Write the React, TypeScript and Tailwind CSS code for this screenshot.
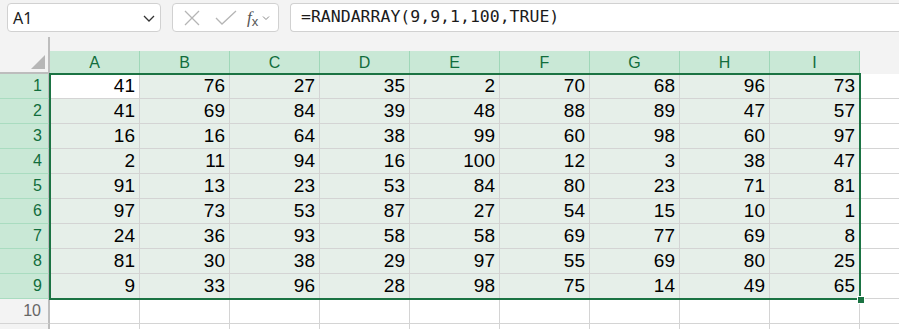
import React from "react";

const data = [
  [41, 76, 27, 35, 2, 70, 68, 96, 73],
  [41, 69, 84, 39, 48, 88, 89, 47, 57],
  [16, 16, 64, 38, 99, 60, 98, 60, 97],
  [2, 11, 94, 16, 100, 12, 3, 38, 47],
  [91, 13, 23, 53, 84, 80, 23, 71, 81],
  [97, 73, 53, 87, 27, 54, 15, 10, 1],
  [24, 36, 93, 58, 58, 69, 77, 69, 8],
  [81, 30, 38, 29, 97, 55, 69, 80, 25],
  [9, 33, 96, 28, 98, 75, 14, 49, 65],
];
const cols = ["A", "B", "C", "D", "E", "F", "G", "H", "I"];

export default function App() {
  return (
    <div className="relative w-[899px] h-[329px] overflow-hidden bg-white font-['Liberation_Sans',sans-serif]">
      {/* Top bar */}
      <div className="flex h-[37px] bg-[#f3f3f3] pt-[3px] pl-[7px]">
        <div className="flex items-center justify-between w-[154px] h-[29px] bg-white border border-[#d1d1d1] rounded-[4px] pl-[5px] pr-[4px]">
          <span className="font-['Noto_Sans',sans-serif] text-[16px] text-[#1b1b1b]">A1</span>
          <svg width="14" height="10" viewBox="0 0 14 10">
            <path d="M2 3 L7 8 L12 3" fill="none" stroke="#333" strokeWidth="1.3" />
          </svg>
        </div>
        <div className="flex items-center ml-[11px] w-[107px] h-[29px] bg-white border border-[#d1d1d1] rounded-[4px] pl-[11px]">
          <svg width="16" height="16" viewBox="0 0 16 16">
            <path d="M1 1 L15 15 M15 1 L1 15" stroke="#b5b5b5" strokeWidth="1.3" fill="none" />
          </svg>
          <svg width="22" height="16" viewBox="0 0 22 16" className="ml-[15px]">
            <path d="M1 8 L7 14 L21 1" stroke="#b5b5b5" strokeWidth="1.3" fill="none" />
          </svg>
          <span className="ml-[10px] font-['Liberation_Serif',serif] italic text-[17px] text-[#555] leading-none">
            f<span className="text-[13px] not-italic font-['Liberation_Sans',sans-serif] relative top-[3px]">x</span>
          </span>
          <svg width="8" height="6" viewBox="0 0 8 6" className="ml-[4px]">
            <path d="M1 1.5 L4 4.5 L7 1.5" fill="none" stroke="#888" strokeWidth="1" />
          </svg>
        </div>
        <div className="flex items-center ml-[11px] flex-1 h-[29px] bg-white border border-[#d1d1d1] rounded-l-[4px] border-r-0 pl-[10px]">
          <span className="font-['DejaVu_Sans_Mono',monospace] text-[16.5px] text-[#1b1b1b]">
            =RANDARRAY(9,9,1,100,TRUE)
          </span>
        </div>
      </div>

      {/* Header row */}
      <div className="flex h-[37px]">
        <div className="flex items-end justify-end w-[50px] h-[37px] bg-[#f3f3f3] border-r-2 border-b-2 border-[#bdbdbd] pr-[3px] pb-[3px] shrink-0">
          <svg width="14" height="14" viewBox="0 0 14 14">
            <path d="M14 0 L14 14 L0 14 Z" fill="#b6b6b6" />
          </svg>
        </div>
        <div className="flex flex-col flex-1 bg-[#f3f3f3]">
          <div className="h-[14px]" />
          <div className="flex h-[23px]">
            {cols.map((c) => (
              <div
                key={c}
                className="w-[90px] shrink-0 flex items-center justify-center bg-[#c9e8d6] border-r border-[#9fd7b8] text-[#116d3c] text-[16px]"
              >
                {c}
              </div>
            ))}
          </div>
        </div>
      </div>

      {/* Data rows */}
      {[...data, null, null].map((row, r) => (
        <div key={r} className="flex h-[25px]">
          <div
            className={
              row
                ? "w-[50px] shrink-0 flex items-center justify-end pr-[6px] bg-[#c9e8d6] border-b border-r-2 border-b-[#a9dcc0] border-r-[#bdbdbd] text-[#116d3c] text-[16px]"
                : "w-[50px] shrink-0 flex items-center justify-end pr-[7px] bg-[#f3f3f3] border-b border-r-2 border-b-[#d4d4d4] border-r-[#bdbdbd] text-[#666] text-[16px]"
            }
          >
            {r < 10 ? r + 1 : ""}
          </div>
          {cols.map((c, ci) => (
            <div
              key={c}
              className={
                "w-[90px] shrink-0 flex items-end justify-end pr-[4px] pb-[1px] border-r border-b border-[#d4d4d4] text-[19px] leading-[22px] text-black " +
                (row ? (r === 0 && ci === 0 ? "bg-white" : "bg-[#e6efe9]") : "bg-white")
              }
            >
              {row ? row[ci] : ""}
            </div>
          ))}
          <div className="flex-1 border-b border-[#d4d4d4] bg-white" />
        </div>
      ))}

      {/* Selection border overlay */}
      <div className="absolute left-[49px] top-[73px] w-[812px] h-[227px] border-2 border-[#1b7343] pointer-events-none" />
      <div className="absolute left-[857px] top-[296px] w-[6px] h-[6px] bg-[#1b7343] border border-white box-content" />
    </div>
  );
}
